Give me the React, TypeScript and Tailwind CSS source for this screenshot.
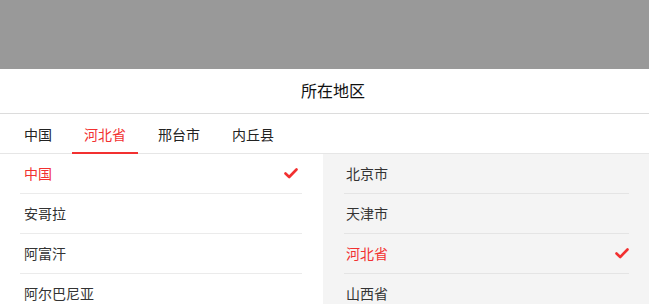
import React from "react";

const font = { fontFamily: '"Noto Sans CJK SC", "Noto Sans", sans-serif' };

function Check() {
  return (
    <svg width="14" height="11" viewBox="0 0 14 11" className="shrink-0">
      <path d="M1.5 5.5 L5.2 9 L12.5 1.5" fill="none" stroke="#f23030" strokeWidth="2.6" strokeLinecap="round" strokeLinejoin="round" />
    </svg>
  );
}

const left = [
  { t: "中国", a: true },
  { t: "安哥拉" },
  { t: "阿富汗" },
  { t: "阿尔巴尼亚" },
];
const right = [
  { t: "北京市" },
  { t: "天津市" },
  { t: "河北省", a: true },
  { t: "山西省" },
];

export default function App() {
  const tabs = ["中国", "河北省", "邢台市", "内丘县"];
  return (
    <div className="w-[649px] h-[304px] overflow-hidden flex flex-col bg-[#999999]" style={font}>
      <div className="h-[69px] shrink-0" />
      <div className="flex-1 bg-white flex flex-col min-h-0">
        <div className="h-[45px] shrink-0 flex items-center justify-center border-b border-[#dcdcdc] text-[16px] text-[#111] pl-[17px] pb-[3px]">
          所在地区
        </div>
        <div className="h-[40px] shrink-0 flex items-stretch gap-2 pl-3 border-b border-[#e6e6e6]">
          {tabs.map((t, i) => (
            <div
              key={t}
              className={
                i === 1
                  ? "px-3 flex items-center text-[14px] text-[#f23030] border-b-2 border-[#f23030] -mb-px pt-[3px]"
                  : "px-3 flex items-center text-[14px] text-[#222] pt-[1px]"
              }
            >
              {t}
            </div>
          ))}
        </div>
        <div className="flex flex-1 min-h-0">
          <div className="w-[323px] shrink-0 bg-white pl-5 pr-[21px]">
            {left.map((r) => (
              <div key={r.t} className="h-[40px] flex items-center justify-between border-b border-[#ebebeb] pl-1 pr-1">
                <span className={r.a ? "text-[14px] text-[#f23030]" : "text-[14px] text-[#333]"}>{r.t}</span>
                {r.a && <Check />}
              </div>
            ))}
          </div>
          <div className="flex-1 bg-[#f4f4f4] pl-[21px] pr-5">
            {right.map((r) => (
              <div key={r.t} className="h-[40px] flex items-center justify-between border-b border-[#e4e4e4] pl-[2px]">
                <span className={r.a ? "text-[14px] text-[#f23030]" : "text-[14px] text-[#333]"}>{r.t}</span>
                {r.a && <Check />}
              </div>
            ))}
          </div>
        </div>
      </div>
    </div>
  );
}
